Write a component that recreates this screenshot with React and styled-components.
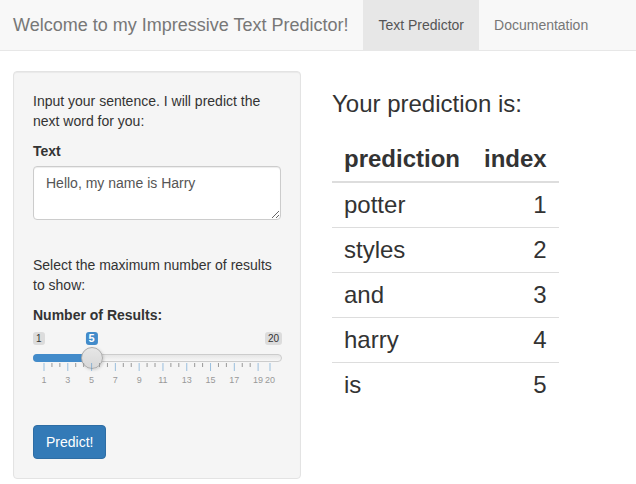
import styled, { createGlobalStyle } from "styled-components";

const GlobalStyle = createGlobalStyle`
  html, body {
    margin: 0;
    padding: 0;
    background: #fff;
  }

  body {
    font-family: "Liberation Sans", Arial, sans-serif;
    font-size: 14px;
    line-height: 20px;
    color: #333;
  }

  * {
    box-sizing: border-box;
  }
`;

const MIN = 1;
const MAX = 20;
const VALUE = 5;
const TRACK_START = 11;
const UNIT = 226 / (MAX - MIN);

const predictions = [
  { word: "potter", index: 1 },
  { word: "styles", index: 2 },
  { word: "and", index: 3 },
  { word: "harry", index: 4 },
  { word: "is", index: 5 },
];

const posOf = (v) => TRACK_START + (v - MIN) * UNIT;

// grid ticks like ion.rangeSlider: big ticks every 2, two small ticks between
const SliderGrid = () => {
  const majors = [1, 3, 5, 7, 9, 11, 13, 15, 17, 19, 20];
  const minors = [];
  for (let v = 1; v < 19; v += 2) {
    minors.push(v + 2 / 3, v + 4 / 3);
  }

  return (
    <GridSvg width="248" height="27" viewBox="0 0 248 27">
      {minors.map((v) => (
        <rect key={"m" + v} x={posOf(v) - 0.5} y="0" width="1" height="4" fill="#999" />
      ))}
      {majors.map((v) => (
        <g key={v}>
          <rect x={posOf(v) - 0.5} y="0" width="1" height="8" fill="#428bca" opacity="0.5" />
          <text
            x={posOf(v)}
            y="20"
            textAnchor="middle"
            fontSize="9"
            fill="#999"
            fontFamily="Liberation Sans, Arial, sans-serif"
          >
            {v}
          </text>
        </g>
      ))}
    </GridSvg>
  );
};

const App = () => {
  const handleX = posOf(VALUE);

  return (
    <>
      <GlobalStyle />
      <Navbar>
        <Brand>Welcome to my Impressive Text Predictor!</Brand>
        <NavLink $active href="#">
          Text Predictor
        </NavLink>
        <NavLink href="#">Documentation</NavLink>
      </Navbar>

      <Page>
        <Well>
          <Help>Input your sentence. I will predict the next word for you:</Help>
          <FormGroup>
            <Label htmlFor="text">Text</Label>
            <TextArea id="text" defaultValue="Hello, my name is Harry" />
          </FormGroup>

          <Help $spaced>Select the maximum number of results to show:</Help>
          <Label>Number of Results:</Label>
          <Slider>
            <EdgeLabel $side="left">1</EdgeLabel>
            <ValueLabel style={{ left: handleX }}>{VALUE}</ValueLabel>
            <EdgeLabel $side="right">20</EdgeLabel>
            <Track />
            <TrackFill style={{ width: handleX }} />
            <Handle style={{ left: handleX - 11 }} />
            <SliderGrid />
          </Slider>

          <PredictButton type="button">Predict!</PredictButton>
        </Well>

        <Main>
          <Heading>Your prediction is:</Heading>
          <ResultTable>
            <thead>
              <tr>
                <Th>prediction</Th>
                <Th $right>index</Th>
              </tr>
            </thead>
            <tbody>
              {predictions.map((p) => (
                <tr key={p.index}>
                  <Td>{p.word}</Td>
                  <Td $right>{p.index}</Td>
                </tr>
              ))}
            </tbody>
          </ResultTable>
        </Main>
      </Page>
    </>
  );
};

const Navbar = styled.nav`
  display: flex;
  align-items: stretch;
  height: 51px;
  background: #f8f8f8;
  border-bottom: 1px solid #e7e7e7;
`;

const Brand = styled.span`
  padding: 15px 15px 15px 13px;
  font-size: 18px;
  line-height: 20px;
  color: #777;
`;

const NavLink = styled.a`
  padding: 15px;
  line-height: 20px;
  font-size: 14px;
  text-decoration: none;
  color: ${(p) => (p.$active ? "#555" : "#777")};
  background: ${(p) => (p.$active ? "#e7e7e7" : "transparent")};
`;

const Page = styled.div`
  display: flex;
  align-items: flex-start;
  padding: 20px 0 0 13px;
`;

const Well = styled.div`
  width: 288px;
  padding: 19px;
  background: #f5f5f5;
  border: 1px solid #e3e3e3;
  border-radius: 4px;
  box-shadow: inset 0 1px 1px rgba(0, 0, 0, 0.05);
`;

const Help = styled.p`
  margin: ${(p) => (p.$spaced ? "35px" : "0")} 0 10px;
`;

const FormGroup = styled.div`
  margin-bottom: 15px;
`;

const Label = styled.label`
  display: block;
  margin-bottom: 5px;
  font-weight: 700;
`;

const TextArea = styled.textarea`
  display: block;
  width: 100%;
  height: 54px;
  margin: 0;
  padding: 6px 12px;
  font-family: inherit;
  font-size: 14px;
  line-height: 20px;
  color: #555;
  background: #fff;
  border: 1px solid #ccc;
  border-radius: 4px;
  box-shadow: inset 0 1px 1px rgba(0, 0, 0, 0.075);
  resize: vertical;
`;

const Slider = styled.div`
  position: relative;
  width: 100%;
  height: 60px;
`;

const EdgeLabel = styled.span`
  position: absolute;
  top: 2px;
  ${(p) => (p.$side === "left" ? "left: 0;" : "right: -1px;")}
  padding: 0 3px;
  font-size: 10px;
  line-height: 13px;
  color: #333;
  background: rgba(0, 0, 0, 0.1);
  border-radius: 3px;
`;

const ValueLabel = styled.span`
  position: absolute;
  top: 2px;
  transform: translateX(-50%);
  padding: 0 3px;
  font-size: 11px;
  font-weight: 700;
  line-height: 13px;
  color: #fff;
  background: #428bca;
  border-radius: 3px;
`;

const Track = styled.div`
  position: absolute;
  top: 24px;
  left: 0;
  right: -1px;
  height: 8px;
  border: 1px solid #ccc;
  border-radius: 8px;
  background: linear-gradient(to bottom, #ddd -50%, #fff 150%);
`;

const TrackFill = styled.div`
  position: absolute;
  top: 24px;
  left: 0;
  height: 8px;
  background: #428bca;
  border-radius: 8px 0 0 8px;
`;

const Handle = styled.div`
  position: absolute;
  top: 17px;
  width: 22px;
  height: 22px;
  border: 1px solid #ababab;
  border-radius: 50%;
  background: linear-gradient(to bottom, #e6e6e6 0%, #d8d8d8 100%);
  box-shadow: 1px 1px 3px rgba(0, 0, 0, 0.15);
`;

const GridSvg = styled.svg`
  position: absolute;
  top: 33px;
  left: 0;
  display: block;
`;

const PredictButton = styled.button`
  display: block;
  margin-top: 35px;
  padding: 6px 12px;
  font-family: inherit;
  font-size: 14px;
  line-height: 20px;
  color: #fff;
  background: #337ab7;
  border: 1px solid #2e6da4;
  border-radius: 4px;
  cursor: pointer;
`;

const Main = styled.div`
  margin-left: 31px;
`;

const Heading = styled.h3`
  margin: 20px 0 20px;
  font-size: 24px;
  font-weight: 500;
  line-height: 1.1;
  color: #333;
`;

const ResultTable = styled.table`
  border-collapse: collapse;
  font-size: 24px;
  line-height: 28px;
  color: #333;
`;

const Th = styled.th`
  padding: 8px 12px;
  font-weight: 700;
  text-align: ${(p) => (p.$right ? "right" : "left")};
  border-bottom: 2px solid #ddd;
`;

const Td = styled.td`
  padding: 8px 12px;
  text-align: ${(p) => (p.$right ? "right" : "left")};
  border-top: 1px solid #ddd;
`;

export default App;
